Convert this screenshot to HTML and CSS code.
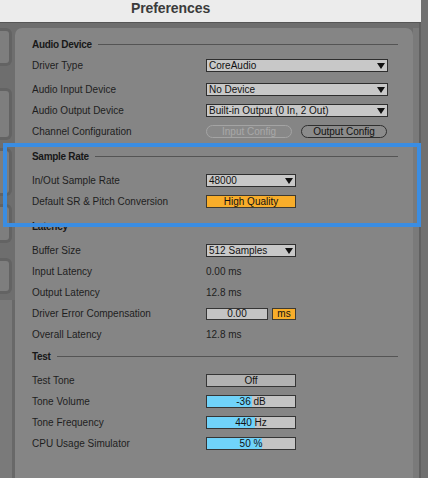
FILE: index.html
```html
<!DOCTYPE html>
<html lang="en">
<head>
<meta charset="utf-8">
<title>Preferences</title>
<link rel="stylesheet" href="styles.css">
</head>
<body>
<div class="screen">
  <div class="window">
    <header class="titlebar"><span class="title">Preferences</span></header>
    <div class="body">
      <nav class="tabs">
        <div class="tab tab-1"></div>
        <div class="tab tab-2"></div>
        <div class="tab tab-3"></div>
        <div class="tab tab-4"></div>
        <div class="tab tab-5"></div>
        <div class="tabs-fill"></div>
      </nav>
      <main class="panel">
        <section class="section">
          <div class="section-head section-head--tight"><span>Audio Device</span><i class="rule"></i></div>
          <div class="row"><span class="label">Driver Type</span><div class="dropdown dropdown--wide"><span>CoreAudio</span><i class="arrow"></i></div></div>
          <div class="group">
            <div class="row"><span class="label">Audio Input Device</span><div class="dropdown dropdown--wide"><span>No Device</span><i class="arrow"></i></div></div>
            <div class="row"><span class="label">Audio Output Device</span><div class="dropdown dropdown--wide"><span>Built-in Output (0 In, 2 Out)</span><i class="arrow"></i></div></div>
            <div class="row"><span class="label">Channel Configuration</span>
              <div class="pills"><span class="pill pill--disabled">Input Config</span><span class="pill">Output Config</span></div>
            </div>
          </div>
        </section>
        <section class="section">
          <div class="section-head"><span>Sample Rate</span><i class="rule"></i></div>
          <div class="row"><span class="label">In/Out Sample Rate</span><div class="dropdown"><span>48000</span><i class="arrow"></i></div></div>
          <div class="row"><span class="label">Default SR &amp; Pitch Conversion</span><div class="box box--orange">High Quality</div></div>
        </section>
        <section class="section">
          <div class="section-head"><span>Latency</span><i class="rule"></i></div>
          <div class="row"><span class="label">Buffer Size</span><div class="dropdown"><span>512 Samples</span><i class="arrow"></i></div></div>
          <div class="row"><span class="label">Input Latency</span><span class="value">0.00 ms</span></div>
          <div class="row"><span class="label">Output Latency</span><span class="value">12.8 ms</span></div>
          <div class="row"><span class="label">Driver Error Compensation</span>
            <div class="pair"><div class="box box--num">0.00</div><div class="box box--unit">ms</div></div>
          </div>
          <div class="row"><span class="label">Overall Latency</span><span class="value">12.8 ms</span></div>
        </section>
        <section class="section section--close">
          <div class="section-head"><span>Test</span><i class="rule"></i></div>
          <div class="row"><span class="label">Test Tone</span><div class="box box--toggle">Off</div></div>
          <div class="row"><span class="label">Tone Volume</span><div class="box slider"><i class="slider-fill" style="width:51%"></i><span class="slider-text">-36 dB</span></div></div>
          <div class="row"><span class="label">Tone Frequency</span><div class="box slider"><i class="slider-fill" style="width:55%"></i><span class="slider-text">440 Hz</span></div></div>
          <div class="row"><span class="label">CPU Usage Simulator</span><div class="box slider"><i class="slider-fill" style="width:63%"></i><span class="slider-text">50 %</span></div></div>
        </section>
      </main>
      <div class="track"></div>
    </div>
  </div>
  <div class="edge"></div>
  <div class="highlight"></div>
</div>
</body>
</html>
```
FILE: styles.css
```css
* { box-sizing: border-box; }

body {
  margin: 0;
  background: #6f6f6f;
  font-family: "Liberation Sans", Arial, sans-serif;
  font-size: 10px;
  color: #1e1e1e;
}

.screen {
  position: relative;
  display: flex;
  height: 478px;
  overflow: hidden;
}

.window {
  width: 421px;
  flex: none;
  display: flex;
  flex-direction: column;
}

.titlebar {
  height: 23px;
  background: #ececec;
  border-bottom: 1px solid #565656;
}

.title {
  display: block;
  padding-left: 131px;
  font-weight: bold;
  font-size: 14px;
  line-height: 16px;
  letter-spacing: -0.1px;
  color: #3b3b3b;
}

.body {
  flex: 1;
  display: flex;
  padding-top: 5px;
  background: #6e6e6e;
  border-right: 2px solid #606060;
}

.tabs {
  width: 15px;
  flex: none;
  display: flex;
  flex-direction: column;
}

.tab {
  width: 12px;
  background: #7e7e7e;
  border: 3px solid #636363;
  border-left: none;
  border-radius: 0 6px 6px 0;
}
.tab-1 { height: 38px; }
.tab-2 { height: 52px; margin-top: 22px; }
.tab-3 { height: 48px; margin-top: 8px; }
.tab-4 { height: 39px; margin-top: 8px; }
.tab-5 { height: 36px; margin-top: 15px; }

.tabs-fill {
  flex: 1;
  width: 15px;
  margin-top: 6px;
  background: #7a7a7a;
  border-right: 3px solid #686868;
}

.panel {
  flex: 1;
  background: #858585;
  border-radius: 7px 7px 0 0;
  padding: 6px 15px 0 17px;
}

.track {
  width: 6px;
  flex: none;
  background: #7a7a7a;
}

.edge {
  flex: 1;
  background: #707070;
}

.section + .section { margin-top: 4px; }
.section.section--close { margin-top: 1px; }

.section-head {
  display: flex;
  align-items: center;
  gap: 6px;
  height: 21px;
  margin-bottom: 3px;
  font-weight: bold;
  letter-spacing: -0.3px;
  color: #181818;
}
.section-head--tight { margin-bottom: 0; }

.rule {
  flex: 1;
  height: 1px;
  margin-top: -1px;
  background: #545454;
}

.group { margin-top: 3px; }

.row {
  display: flex;
  align-items: center;
  height: 21px;
}

.label {
  width: 174px;
  flex: none;
  white-space: nowrap;
}

.dropdown {
  width: 90px;
  height: 13px;
  display: flex;
  align-items: center;
  justify-content: space-between;
  padding: 0 2px 0 2px;
  border: 1px solid #2e2e2e;
  background: #c8c8c8;
  color: #111;
  line-height: 11px;
  white-space: nowrap;
}
.dropdown--wide { width: 182px; }

.arrow {
  width: 0;
  height: 0;
  border-left: 4px solid transparent;
  border-right: 4px solid transparent;
  border-top: 6px solid #111;
}

.pills {
  display: flex;
  gap: 9px;
}

.pill {
  width: 86px;
  height: 13px;
  border: 1px solid #2f2f2f;
  border-radius: 7px;
  background: #8b8b8b;
  text-align: center;
  line-height: 11px;
  color: #111;
}
.pill--disabled {
  border-color: #a4a4a4;
  color: #a9a9a9;
  background: #888888;
}

.box {
  width: 90px;
  height: 13px;
  border: 1px solid #353535;
  background: #c4c4c4;
  text-align: center;
  line-height: 11px;
  color: #111;
}
.box--orange { background: #f8ad2a; border-color: #3e3a30; }
.box--toggle { background: #b2b2b2; }

.pair {
  display: flex;
  gap: 4px;
}
.box--num { width: 62px; height: 12px; line-height: 10px; }
.box--unit { width: 24px; height: 12px; line-height: 10px; background: #f8ad2a; border-color: #3e3a30; }

.slider {
  position: relative;
  overflow: hidden;
}
.slider-fill {
  position: absolute;
  left: 0;
  top: 0;
  bottom: 0;
  background: #70d3fa;
}
.slider-text { position: relative; }

.highlight {
  position: absolute;
  left: 3px;
  top: 143px;
  width: 418px;
  height: 84px;
  border: 4px solid #3a8de3;
  pointer-events: none;
}
```
